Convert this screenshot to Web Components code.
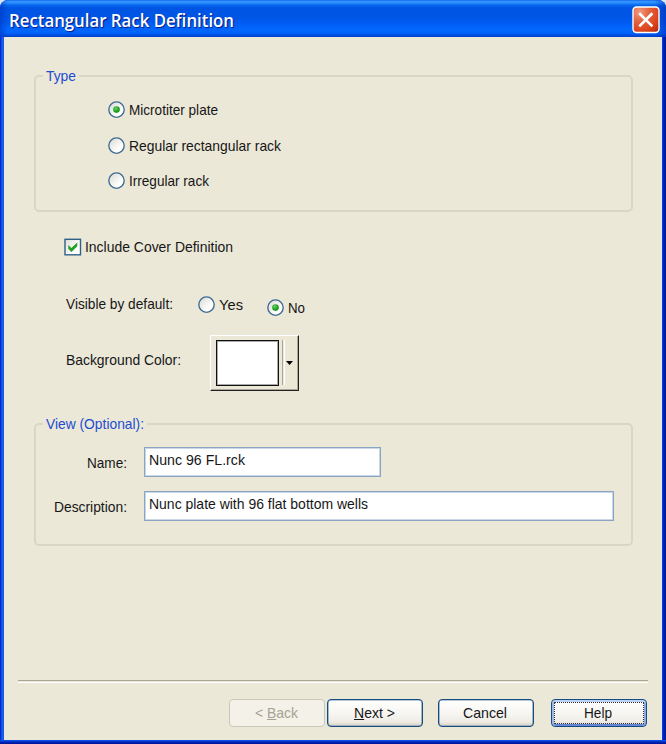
<!DOCTYPE html>
<html lang="en"><head><meta charset="utf-8"><title>Rectangular Rack Definition</title>
<style>
html,body{margin:0;width:666px;height:744px;overflow:hidden;background:#dbe6f5}
body{font:15px/18px "Liberation Sans",Arial,sans-serif;color:#161618}
.row{display:flex;align-items:flex-start}
.page{display:flex;flex-direction:column;height:100%}
.options{display:flex;flex-direction:column;padding:24px 0 0 72px}
.form{display:grid;grid-template-columns:91px 1fr;column-gap:17px;row-gap:14px;padding:22px 17px 0 0}
.form > fit-text{justify-self:end;margin-top:7px}
</style></head><body>
<xp-window>
  <fit-text slot="title" w="225">Rectangular Rack Definition</fit-text>
  <div class="page">
    <xp-group style="height:137px;margin:38px 29px 0 30px">
      <fit-text slot="legend" w="30">Type</fit-text>
      <div class="options">
        <xp-radio checked><fit-text w="89">Microtiter plate</fit-text></xp-radio>
        <xp-radio style="margin-top:18px"><fit-text w="152">Regular rectangular rack</fit-text></xp-radio>
        <xp-radio style="margin-top:17px"><fit-text w="80">Irregular rack</fit-text></xp-radio>
      </div>
    </xp-group>
    <xp-check style="margin:26px 0 0 60px"><fit-text w="148">Include Cover Definition</fit-text></xp-check>
    <div class="row" style="margin:39px 0 0 62px;height:24px">
      <fit-text w="107">Visible by default:</fit-text>
      <xp-radio style="margin:1px 0 0 25px"><fit-text w="24">Yes</fit-text></xp-radio>
      <xp-radio checked style="margin:4px 0 0 24px"><fit-text w="17">No</fit-text></xp-radio>
    </div>
    <div class="row" style="margin:16px 0 0 62px">
      <fit-text w="115" style="margin-top:16px">Background Color:</fit-text>
      <xp-color style="margin-left:29px"></xp-color>
    </div>
    <xp-group style="height:123px;margin:32px 29px 0 30px">
      <fit-text slot="legend" w="98">View (Optional):</fit-text>
      <div class="form">
        <fit-text w="40">Name:</fit-text>
        <xp-field style="width:237px"><fit-text w="96">Nunc 96 FL.rck</fit-text></xp-field>
        <fit-text w="73">Description:</fit-text>
        <xp-field style="width:470px"><fit-text w="219">Nunc plate with 96 flat bottom wells</fit-text></xp-field>
      </div>
    </xp-group>
    <xp-rule style="margin:134px 14px 0"></xp-rule>
    <div class="row" style="margin:16px 0 0 225px">
      <xp-button disabled><fit-text w="43">&lt; <u>B</u>ack</fit-text></xp-button>
      <xp-button style="margin-left:2px"><fit-text w="41"><u>N</u>ext &gt;</fit-text></xp-button>
      <xp-button style="margin-left:15px"><fit-text w="44">Cancel</fit-text></xp-button>
      <xp-button focused style="margin-left:17px"><fit-text w="28">Help</fit-text></xp-button>
    </div>
  </div>
</xp-window>
<script>
function define(name, html, ready) {
  const template = document.createElement('template');
  template.innerHTML = html;
  customElements.define(name, class extends HTMLElement {
    constructor() {
      super();
      this.attachShadow({mode: 'open'}).append(template.content.cloneNode(true));
    }
    connectedCallback() { if (ready) ready(this); }
  });
}

define('xp-window', `<style>
:host{display:flex;flex-direction:column;box-sizing:border-box;width:666px;height:744px;border-radius:8px 8px 0 0;overflow:hidden;
 background:linear-gradient(90deg,#0019cf 0,#0831d9 1px,#166aee 2px,#0855dd 4px,transparent 4px,transparent 662px,#0d52e8 662px,#0023d0 663px,#001da0 665px,#00138c),#0040dc}
header{display:flex;box-sizing:border-box;height:37px;flex:none;padding:6px 6px 0 9px;justify-content:space-between;
 background:linear-gradient(90deg,#0038c599,transparent 8px,transparent 654px,#0030b899),linear-gradient(#0058e6 0,#3a93ff 1px,#288eff 3px,#0768ee 5px,#0054e3 8px,#0055e5 17px,#005bf1 23px,#0266fd 28px,#0266fc 32px,#005bf0 34px,#0046d5 36px,#0040c4)}
.title{font:600 18px/26px "Open Sans","Noto Sans",sans-serif;color:#fff;text-shadow:1px 1px 1px #0a1883;margin-top:1px}
svg{display:block}
main{flex:1;min-height:0;margin:0 4px;background:#ebe8d7}
footer{height:4px;flex:none;background:linear-gradient(#0c56e8 0,#0c44db 1px,#0025bd 2px,#001390)}
</style><header><div class="title"><slot name="title"></slot></div>
<svg width="28" height="28" viewBox="0 0 28 28"><defs><radialGradient id="r" cx=".25" cy=".2" r="1"><stop offset="0" stop-color="#f09b80"/><stop offset=".35" stop-color="#e56542"/><stop offset=".75" stop-color="#dc431b"/><stop offset="1" stop-color="#b52d0c"/></radialGradient></defs>
<rect x="1" y="1" width="26" height="25.5" rx="3.5" fill="url(#r)" stroke="#fff" stroke-width="1.4"/><path d="M8.2 8.2 19.4 19.4M19.4 8.2 8.2 19.4" stroke="#fff" stroke-width="2.7" stroke-linecap="square"/></svg></header>
<main><slot></slot></main><footer></footer>`);

define('xp-group', `<style>
:host{display:block;position:relative;box-sizing:border-box;border:2px solid #d8d7c6;border-radius:5px}
.legend{position:absolute;left:7px;top:-10px;padding:0 3px;background:#ebe8d7;color:#224dd3}
</style><div class="legend"><slot name="legend"></slot></div><slot></slot>`);

define('xp-radio', `<style>
:host{display:flex;align-items:flex-start;height:18px}
svg{display:block;margin-right:4px;flex:none}.dot{display:none}:host([checked]) .dot{display:block}
</style><svg width="17" height="18" viewBox="0 0 17 18"><defs><linearGradient id="g" x2="1" y2="1"><stop stop-color="#d9d8d0"/><stop offset=".7" stop-color="#fff"/></linearGradient><radialGradient id="d" cx=".4" cy=".35"><stop stop-color="#65d562"/><stop offset="1" stop-color="#17991b"/></radialGradient></defs>
<circle cx="8.5" cy="8.6" r="7.7" fill="url(#g)" stroke="#3d6b94" stroke-width="1.35"/><circle class="dot" cx="8.5" cy="8.6" r="3.3" fill="url(#d)"/></svg><slot></slot>`);

define('xp-check', `<style>:host{display:flex;height:18px}svg{display:block;margin-right:3px;flex:none}</style>
<svg width="18" height="18" viewBox="0 0 18 18"><defs><linearGradient id="g" x2="1" y2="1"><stop stop-color="#deded7"/><stop offset=".7" stop-color="#fff"/></linearGradient></defs>
<rect x="1" y="1.3" width="15.5" height="15.5" fill="url(#g)" stroke="#2f6088" stroke-width="1.4"/><path d="M4.3 7 7.4 10.1 13.3 4.4V8.3L7.4 13.9 4.3 10.8Z" fill="#21a121"/></svg><slot></slot>`);

define('xp-color', `<style>
:host{display:flex;box-sizing:border-box;width:89px;height:56px;padding:4px 0 0 5px;border:1px solid;border-color:#fff #222 #222 #fff;box-shadow:inset -1px -1px #aaa798}
.swatch{box-sizing:border-box;width:63px;height:46px;border:1px solid #111;box-shadow:inset 0 0 0 1px #aaa;background:#fff}
.sep{width:1px;height:45px;margin-left:3px;border-left:1px solid #aaa798;border-right:1px solid #fff}
svg{display:block;margin:21px 0 0 1px}
</style><div class="swatch"></div><div class="sep"></div><svg width="7" height="4" viewBox="0 0 7 4"><path d="M0 0H7L3.5 4Z" fill="#000"/></svg>`);

define('xp-field', `<style>:host{display:block;box-sizing:border-box;height:30px;border:1px solid #89a5c4;box-shadow:inset 0 0 0 1px #c9d6e4;background:#fff;padding:3px 0 0 4px}</style><slot></slot>`);

define('xp-rule', `<style>:host{display:block;height:1px;flex:none;border-top:1px solid #a9a694;border-bottom:1px solid #fff}</style>`);

define('xp-button', `<style>
:host{display:flex;box-sizing:border-box;width:96px;height:28px;justify-content:center;padding:4px 2px 0 0;border:1px solid #174c80;border-radius:4px;background:linear-gradient(#fff,#f5f4ef 60%,#eeebe4 85%,#d6d0c5);box-shadow:inset 0 0 0 .6px #6f90ac;position:relative}
:host([disabled]){border-color:#cac8bb;box-shadow:none;background:#f4f2e8;color:#a5a294}
:host([focused]){box-shadow:inset 0 2px #bcd3f4,inset 2px 0 #9db9e9,inset -2px 0 #8cabe5,inset 0 -2px #6385d4}
.focus{display:none;position:absolute;inset:2px;border:1px dotted #332b32}:host([focused]) .focus{display:block}
</style><slot></slot><div class="focus"></div>`);

/* Single-line caption condensed or widened to the width given by its "w" attribute. */
define('fit-text', `<style>:host{display:block;flex:none;white-space:nowrap}span{display:inline-block;transform-origin:0 50%}</style><span><slot></slot></span>`,
  el => {
    const w = +el.getAttribute('w');
    const span = el.shadowRoot.querySelector('span');
    el.style.width = w + 'px';
    span.style.transform = 'scaleX(' + w / span.getBoundingClientRect().width + ')';
  });
</script></body></html>
